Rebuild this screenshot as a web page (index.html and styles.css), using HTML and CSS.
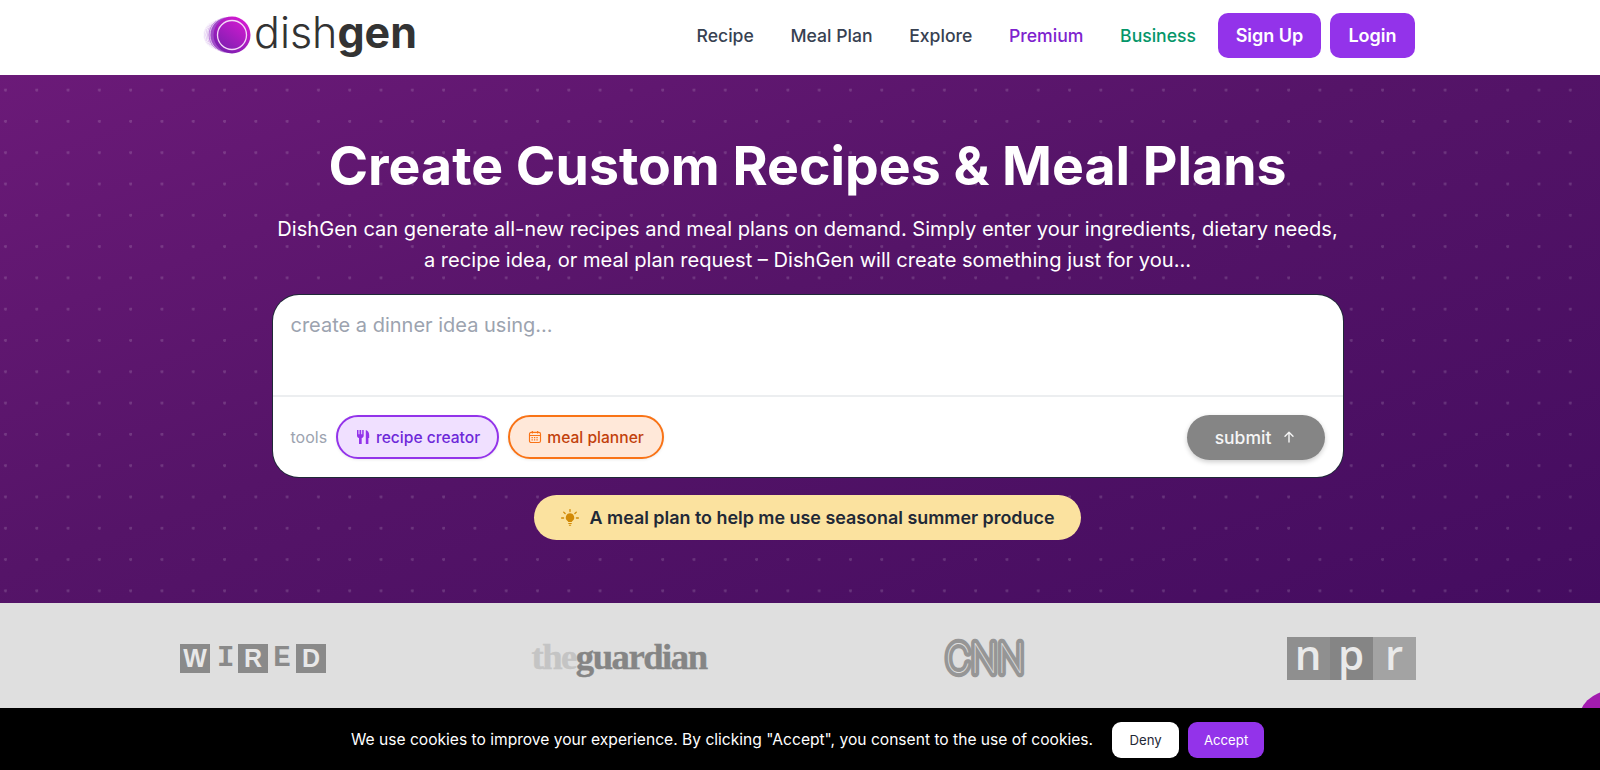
FILE: index.html
```html
<!DOCTYPE html>
<html lang="en">
<head>
<meta charset="utf-8">
<title>DishGen</title>
<link rel="stylesheet" href="styles.css">
</head>
<body>
<header class="topbar">
  <div class="topbar-inner">
    <a class="brand" href="#">
      <svg class="brand-mark" viewBox="0 0 48 40" width="48" height="40">
        <defs>
          <linearGradient id="bm" x1="0.8" y1="0.1" x2="0.2" y2="0.9">
            <stop offset="0" stop-color="#d21ad0"/>
            <stop offset="1" stop-color="#7c1fb0"/>
          </linearGradient>
        </defs>
        <circle cx="14.500" cy="20" r="14" fill="#e6d4f2" stroke="#fff" stroke-width=".8"/>
        <circle cx="17" cy="20" r="15" fill="#dcc0ee" stroke="#fff" stroke-width=".8"/>
        <circle cx="19.500" cy="20" r="16" fill="#cea4e6" stroke="#fff" stroke-width=".8"/>
        <circle cx="22" cy="20" r="17" fill="#b87ada" stroke="#fff" stroke-width=".8"/>
        <circle cx="25" cy="20" r="18" fill="#a04cc8" stroke="#fff" stroke-width=".6"/>
        <circle cx="29" cy="20" r="18.500" fill="url(#bm)"/>
        <circle cx="29" cy="20" r="14.500" fill="none" stroke="#f3d9f7" stroke-width="1.300"/>
      </svg>
      <span class="brand-name"><span class="brand-light">dish</span><b class="brand-bold">gen</b></span>
    </a>
    <nav class="nav">
      <a class="nav-link" href="#">Recipe</a>
      <a class="nav-link" href="#">Meal Plan</a>
      <a class="nav-link" href="#">Explore</a>
      <a class="nav-link premium" href="#">Premium</a>
      <a class="nav-link business" href="#">Business</a>
      <div class="nav-buttons">
        <a class="btn signup" href="#">Sign Up</a>
        <a class="btn login" href="#">Login</a>
      </div>
    </nav>
  </div>
</header>

<main class="hero">
  <h1 class="hero-title">Create Custom Recipes &amp; Meal Plans</h1>
  <p class="hero-text">DishGen can generate all-new recipes and meal plans on demand. Simply enter your ingredients, dietary needs,<br>a recipe idea, or meal plan request – DishGen will create something just for you...</p>
  <form class="composer">
    <div class="composer-input">create a dinner idea using...</div>
    <div class="composer-bar">
      <span class="tools-label">tools</span>
      <button type="button" class="chip chip-recipe">
        <svg class="chip-icon" viewBox="0 0 16 16" width="16" height="16"><path d="M2 1h1.500v4.200h1V1h1.700v4.200h1V1h1.500v5.500c0 1.300-.9 2.300-2 2.600V15H4V9.100C2.900 8.800 2 7.800 2 6.500zM10.800 1c2 .5 3.400 2.500 3.400 5v3h-.8v6h-2.600z" fill="currentColor"/></svg>
        recipe creator
      </button>
      <button type="button" class="chip chip-meal">
        <svg class="chip-icon" viewBox="0 0 16 16" width="14" height="14" fill="none" stroke="currentColor" stroke-width="1.300"><rect x="1.700" y="2.700" width="12.600" height="11.600" rx="1.800"/><path d="M1.700 6.300h12.600M5 1v3M11 1v3"/><path d="M4 8.700h8M4 11.300h8" stroke-dasharray="1.500 1.300"/></svg>
        meal planner
      </button>
      <button type="button" class="submit">submit
        <svg class="submit-icon" viewBox="0 0 14 14" width="14" height="14" fill="none" stroke="currentColor" stroke-width="1.400" stroke-linecap="round" stroke-linejoin="round"><path d="M7 12V2.500M3 6.300 7 2.300l4 4"/></svg>
      </button>
    </div>
  </form>
  <a class="idea" href="#">
    <svg class="idea-icon" viewBox="0 0 18 18" width="18" height="18"><path d="M9 4.200a4.300 4.300 0 0 0-2.400 7.800c.4.300.6.700.6 1.100h3.600c0-.4.200-.8.600-1.100A4.300 4.300 0 0 0 9 4.200zM7.300 14h3.400v1.100H7.300zM7.900 15.800h2.200v1H7.900z" fill="currentColor"/><path d="M9 .6v2M2.700 3.100l1.400 1.400M15.300 3.100l-1.400 1.400M.6 9h2M15.400 9h2" stroke="currentColor" stroke-width="1.300" stroke-linecap="round"/></svg>
    A meal plan to help me use seasonal summer produce
  </a>
</main>

<section class="press">
  <div class="press-inner">
    <div class="wired"><span class="w-box">W</span><span class="w-plain w-i">I</span><span class="w-box">R</span><span class="w-plain w-e">E</span><span class="w-box">D</span></div>
    <div class="guardian"><span class="g-the">the</span><span class="g-name">guardian</span></div>
    <svg class="cnn" viewBox="0 0 82 40" width="82" height="40"><text class="cnn-text" x="41" y="35" text-anchor="middle" textLength="79" lengthAdjust="spacingAndGlyphs">CNN</text></svg>
    <div class="npr"><span class="n1">n</span><span class="n2">p</span><span class="n3">r</span></div>
  </div>
</section>

<div class="chat-bubble"></div>

<aside class="cookie">
  <p class="cookie-text">We use cookies to improve your experience. By clicking "Accept", you consent to the use of cookies.</p>
  <button type="button" class="cookie-btn deny">Deny</button>
  <button type="button" class="cookie-btn accept">Accept</button>
</aside>
</body>
</html>
```
FILE: styles.css
```css
* { box-sizing: border-box; }
html, body { margin: 0; height: 770px; overflow: hidden; }
body { font-family: Inter, "Liberation Sans", sans-serif; background: #fff; color: #1f2937; position: relative; }
a { text-decoration: none; color: inherit; }

.topbar { height: 75px; background: #fff; }
.topbar-inner { height: 100%; padding: 0 185px 5px 203px; display: flex; align-items: center; justify-content: space-between; }
.brand { display: flex; align-items: center; gap: 3px; }
.brand-mark { display: block; }
.brand-name { font-size: 43px; line-height: 1; color: #333; position: relative; top: -3px; }
.brand-light { font-weight: 300; }
.brand-bold { font-weight: 700; }
.nav { display: flex; align-items: center; gap: 36.700px; }
.nav-link { font-size: 17.600px; font-weight: 500; color: #374151; }
.premium { color: #7e22ce; }
.business { color: #059669; }
.nav-buttons { display: flex; gap: 9px; margin-left: -14.700px; }
.btn { height: 45px; display: flex; align-items: center; justify-content: center; background: #9333ea; color: #fff; font-size: 18px; font-weight: 600; border-radius: 10px; }
.signup { width: 103px; }
.login { width: 85px; }

.hero {
  height: 528px;
  padding: 55px 0 0 15px;
  display: flex; flex-direction: column; align-items: center;
  color: #fff;
  background:
    radial-gradient(circle at 5.500px 15px, rgba(255,255,255,.15) 1.200px, transparent 1.800px) 0 0 / 31.300px 31.300px,
    linear-gradient(160deg, #6b1a78 0%, #551468 45%, #440c60 100%);
}
.hero-title { margin: 0; font-size: 53.600px; line-height: 72px; font-weight: 700; }
.hero-text { margin: 12px 0 0; font-size: 20.100px; line-height: 30.500px; text-align: center; }
.composer { margin-top: 20px; width: 1070px; height: 182px; background: #fff; border-radius: 26px; box-shadow: 0 0 0 1px #1f2937; color: #9ca3af; display: flex; flex-direction: column; }
.composer-input { height: 102px; padding: 18px 18px; font-size: 20px; line-height: 24px; border-bottom: 2px solid #eceef0; }
.composer-bar { flex: 1; display: flex; align-items: center; padding: 0 18px 0 18px; }
.tools-label { font-size: 16px; margin-right: 9px; }
.chip { height: 44px; border-radius: 22px; border: 2px solid; font: 500 15.600px Inter, sans-serif; display: flex; align-items: center; justify-content: center; gap: 5px; padding: 0; box-shadow: 0 1px 3px rgba(0,0,0,.08); }
.chip-icon { display: block; }
.chip-recipe { width: 163px; background: #f0e0ff; border-color: #9333ea; color: #6d28d9; }
.chip-recipe .chip-icon { color: #9333ea; }
.chip-meal { width: 156px; margin-left: 9px; background: #ffe8d9; border-color: #f97316; color: #c2410c; }
.chip-meal .chip-icon { color: #f97316; }
.submit { margin-left: auto; width: 138px; height: 45px; border: 0; border-radius: 23px; background: #858585; color: #f5f5f5; font: 500 17.500px Inter, sans-serif; display: flex; align-items: center; justify-content: center; gap: 11px; box-shadow: 0 2px 5px rgba(0,0,0,.2); }
.submit-icon { display: block; }
.idea { margin-top: 18px; width: 547px; height: 45px; border-radius: 23px; background: #fbe29f; color: #1f2937; font-size: 17.900px; font-weight: 600; display: flex; align-items: center; justify-content: center; gap: 11px; }
.idea-icon { color: #d18a07; display: block; }

.press { height: 105px; background: #dfdfdf; }
.press-inner { height: 100%; padding: 34px 66px 0 70px; display: grid; grid-template-columns: repeat(4, 366px); justify-items: center; align-items: start; }
.wired { margin-top: 7px; display: flex; gap: 7px; color: #8a8a8a; }
.w-box { width: 30px; height: 29px; background: #8a8a8a; color: #e8e8e8; text-align: center; font: 700 25px/29px "Liberation Sans", sans-serif; }
.w-plain { height: 29px; text-align: center; font: 700 29px/29px "Liberation Mono", monospace; }
.w-i { width: 14px; }
.w-e { width: 18px; margin: 0 -2px; }
.guardian { margin-top: 1px; font: 700 36.700px/38px "Liberation Serif", serif; letter-spacing: -1.500px; color: #858585; white-space: nowrap; -webkit-text-stroke: .4px currentColor; }
.g-the { color: #c4c4c4; }
.cnn { margin-top: 1px; display: block; overflow: visible; }
.cnn-text { font: 100 41px Inter, sans-serif; fill: #dfdfdf; stroke: #969696; stroke-width: 8.500px; paint-order: stroke; stroke-linejoin: round; }
.npr { display: flex; height: 43px; font: 600 42px/33px "Open Sans", "Liberation Sans", sans-serif; color: #eaeaea; }
.npr span { width: 43px; text-align: center; }
.n1 { background: #8f8f8f; }
.n2 { background: #858585; }
.n3 { background: #a3a3a3; }

.chat-bubble { position: absolute; left: 1578px; top: 691px; width: 64px; height: 64px; border-radius: 50%; background: #a21caf; }
.cookie { position: absolute; left: 0; right: 0; top: 708px; height: 62px; background: #000; display: flex; align-items: center; justify-content: center; padding: 1px 0 0 15px; }
.cookie-text { margin: 0 19px 0 0; color: #fff; font-size: 15.600px; }
.cookie-btn { height: 36px; border: 0; border-radius: 9px; font: 400 13.200px Inter, sans-serif; padding: 0; }
.deny { width: 67px; background: #fff; color: #1f2937; }
.accept { width: 76px; margin-left: 9px; background: #9333ea; color: #fff; }
```
